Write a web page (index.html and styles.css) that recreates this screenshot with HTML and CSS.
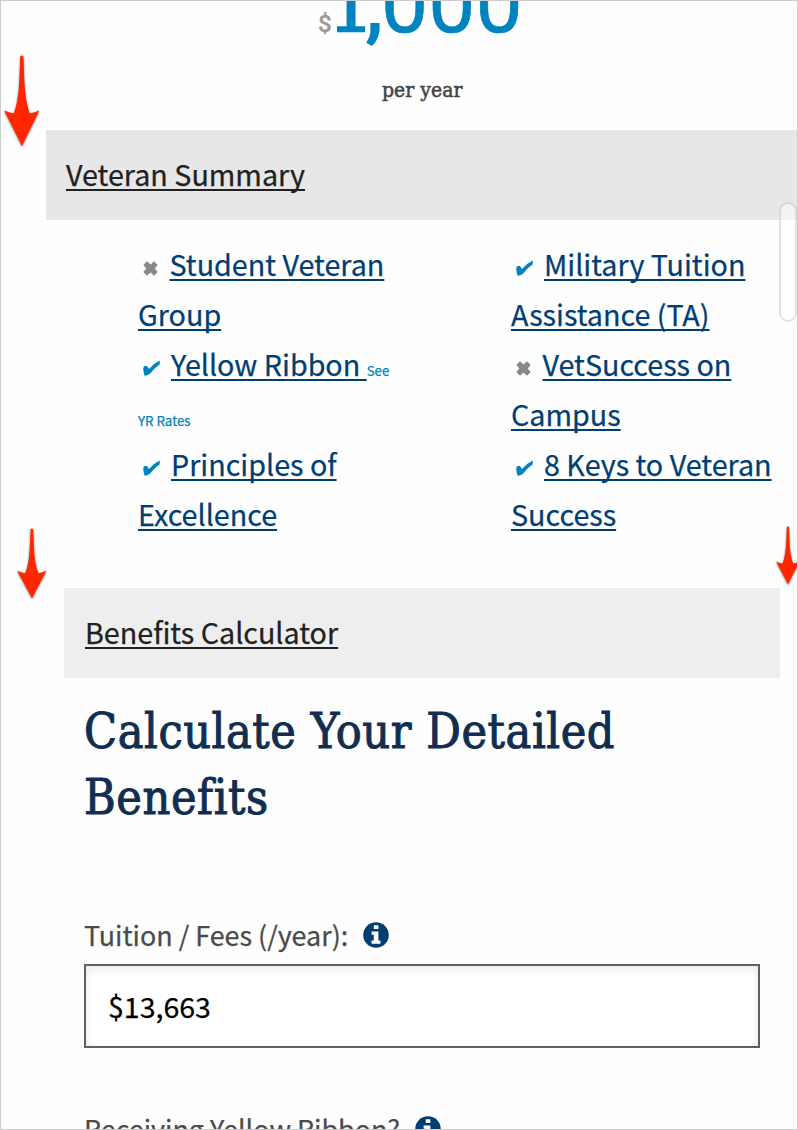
FILE: index.html
```html
<!DOCTYPE html>
<html lang="en">
<head>
<meta charset="utf-8">
<title>Veteran Benefits</title>
<link rel="stylesheet" href="styles.css">
</head>
<body>
<svg class="defs" width="0" height="0">
  <symbol id="check" viewBox="0 0 17 16" preserveAspectRatio="none"><path d="M.2 8.200Q.8 5.200 3.900 5.900L6 8.900Q10.500 3.400 16.700 .4V4.600Q12.500 7 7.200 13.500Q4.500 15.900 1.500 15.600Q.3 11.500 .2 8.200Z"/></symbol>
  <symbol id="cross" viewBox="0 0 15 15"><path d="M4 .3 7.500 3.600 11 .3 14.700 4 11.700 7.500 14.700 11 11 14.700 7.500 11.500 4 14.700 .3 11 3.400 7.500 .3 4Z"/></symbol>
  <symbol id="info" viewBox="0 0 26 26"><circle cx="13" cy="13" r="12.800"/><path fill="#fff" d="M10.800 3.200h4.600v3.900h-4.600zM8.600 9.500h6.800v9.100h2v3.200H8.600v-3.200h2.200v-5.800H8.600z"/></symbol>
  <symbol id="arrow" viewBox="0 0 36 92" preserveAspectRatio="none"><path d="M16.300 1.500Q17.800-.5 19.400 1.500C20.400 25 20.200 44 25.800 58.500Q30.500 57.700 35.300 55.500L18 91 .2 55.500Q5 57.700 9.800 58.500C15.500 44 15.300 25 16.300 1.500Z"/></symbol>
</svg>
<main class="page">
  <div class="amount"><span class="dollar">$</span><span class="one">1</span><span class="comma">,</span><span class="digits">000</span></div>
  <p class="period">per year</p>
  <section>
    <h2 class="bar bar-wide"><a>Veteran Summary</a></h2>
    <div class="columns">
      <ul class="list">
        <li><svg class="icon cross"><use href="#cross"/></svg><a>Student Veteran<br>Group</a></li>
        <li><svg class="icon check"><use href="#check"/></svg><a>Yellow Ribbon&nbsp;</a><small>See<br>YR Rates</small></li>
        <li><svg class="icon check"><use href="#check"/></svg><a>Principles of<br>Excellence</a></li>
      </ul>
      <ul class="list">
        <li><svg class="icon check"><use href="#check"/></svg><a>Military Tuition<br>Assistance (TA)</a></li>
        <li><svg class="icon cross"><use href="#cross"/></svg><a>VetSuccess on<br>Campus</a></li>
        <li><svg class="icon check"><use href="#check"/></svg><a>8 Keys to Veteran<br>Success</a></li>
      </ul>
    </div>
  </section>
  <section>
    <h2 class="bar bar-inset"><a>Benefits Calculator</a></h2>
    <div class="calculator">
      <h1 class="title">Calculate Your Detailed<br>Benefits</h1>
      <label class="label"><span>Tuition / Fees (/year):</span><svg class="info"><use href="#info"/></svg></label>
      <div class="field">$13,663</div>
      <label class="label label-next"><span>Receiving Yellow Ribbon?</span><svg class="info"><use href="#info"/></svg></label>
    </div>
  </section>
  <div class="scroll-thumb"></div>
  <svg class="arrow arrow-a"><use href="#arrow"/></svg>
  <svg class="arrow arrow-b"><use href="#arrow"/></svg>
  <svg class="arrow arrow-c"><use href="#arrow"/></svg>
</main>
</body>
</html>
```
FILE: styles.css
```css
* { box-sizing: border-box; }
body { margin: 0; background: #fff; }
.defs { position: absolute; }
.page {
  position: relative;
  width: 798px;
  height: 1130px;
  overflow: hidden;
  border: 1px solid #ccc;
  background: #fefefe;
  font-family: "Noto Sans CJK SC", "Noto Sans CJK JP", "Open Sans", sans-serif;
  font-size: 28.7px;
  color: #212121;
  white-space: nowrap;
  -webkit-text-stroke: .25px currentColor;
}
h1, h2, p, ul { margin: 0; padding: 0; font-weight: 400; }
.amount {
  display: flex;
  align-items: baseline;
  height: 64px;
  margin: -1px 0 0 317px;
  line-height: 6px;
  color: #0083be;
}
.dollar { width: 13px; font: 500 24px/6px Roboto, sans-serif; color: #999; }
.one {
  width: 35px;
  margin-left: -4px;
  font: 84px/6px "DejaVu Serif Condensed", "DejaVu Serif", serif;
  -webkit-text-stroke: 1.5px currentColor;
}
.comma { width: 19px; font: 500 84px/6px Roboto, sans-serif; padding-left: 3px; }
.digits { font: 400 84px/6px Roboto, sans-serif; -webkit-text-stroke: .6px currentColor; }
.period {
  height: 66px;
  padding-left: 381px;
  font: 21px/53px "DejaVu Serif Condensed", "DejaVu Serif", serif;
  -webkit-text-stroke: .5px currentColor;
  color: #444;
}
.bar { height: 90px; font-size: 28.7px; line-height: 87px; }
.bar a, .list a {
  text-decoration: underline;
  text-decoration-thickness: 2px;
  text-underline-offset: 3px;
  text-decoration-skip-ink: none;
}
.bar-wide { margin-left: 45px; padding-left: 20px; background: #e7e7e7; }
.bar-inset { margin: 0 17px 0 63px; padding-left: 21px; background: #eee; }
.columns {
  display: grid;
  grid-template-columns: 373px 1fr;
  height: 368px;
  padding: 19px 0 0 137px;
}
.list { list-style: none; line-height: 50px; color: #003e73; }
.list li { height: 100px; }
.list small { font-size: 13.3px; line-height: 0; color: #0083be; }
.icon { display: inline-block; vertical-align: 0; margin-left: 5px; }
.cross { width: 15px; height: 15px; margin-right: 11.5px; fill: #888; }
.check { width: 17px; height: 16px; margin-right: 11px; fill: #0083be; }
.calculator { padding: 20px 37px 0 83px; }
.title {
  height: 219px;
  font: 48px/66px "DejaVu Serif Condensed", "DejaVu Serif", serif;
  letter-spacing: .6px;
  -webkit-text-stroke: 1px currentColor;
  color: #112e51;
}
.label { display: flex; height: 47px; line-height: 36px; font-size: 26.9px; color: #4a4a4a; }
.info { width: 26px; height: 26px; margin: 5px 0 0 15px; fill: #003e73; }
.field {
  width: 676px;
  height: 84px;
  padding-left: 22px;
  border: 2px solid #5b616b;
  background: #fff;
  box-shadow: inset 0 2px 8px #0000001c;
  color: #000;
  font-size: 28.5px;
  line-height: 80px;
}
.label-next { margin-top: 63px; }
.scroll-thumb {
  position: absolute;
  left: 778px;
  top: 201px;
  width: 18px;
  height: 120px;
  border: 2px solid #0000001c;
  border-radius: 9px;
  background: #ffffff80;
}
.arrow { position: absolute; fill: #ff2600; filter: drop-shadow(0 1px 1px #0008); }
.arrow-a { left: 3px; top: 54px; width: 36px; height: 92px; }
.arrow-b { left: 16px; top: 527px; width: 30px; height: 71px; }
.arrow-c { left: 775px; top: 525px; width: 24px; height: 59px; }
```
